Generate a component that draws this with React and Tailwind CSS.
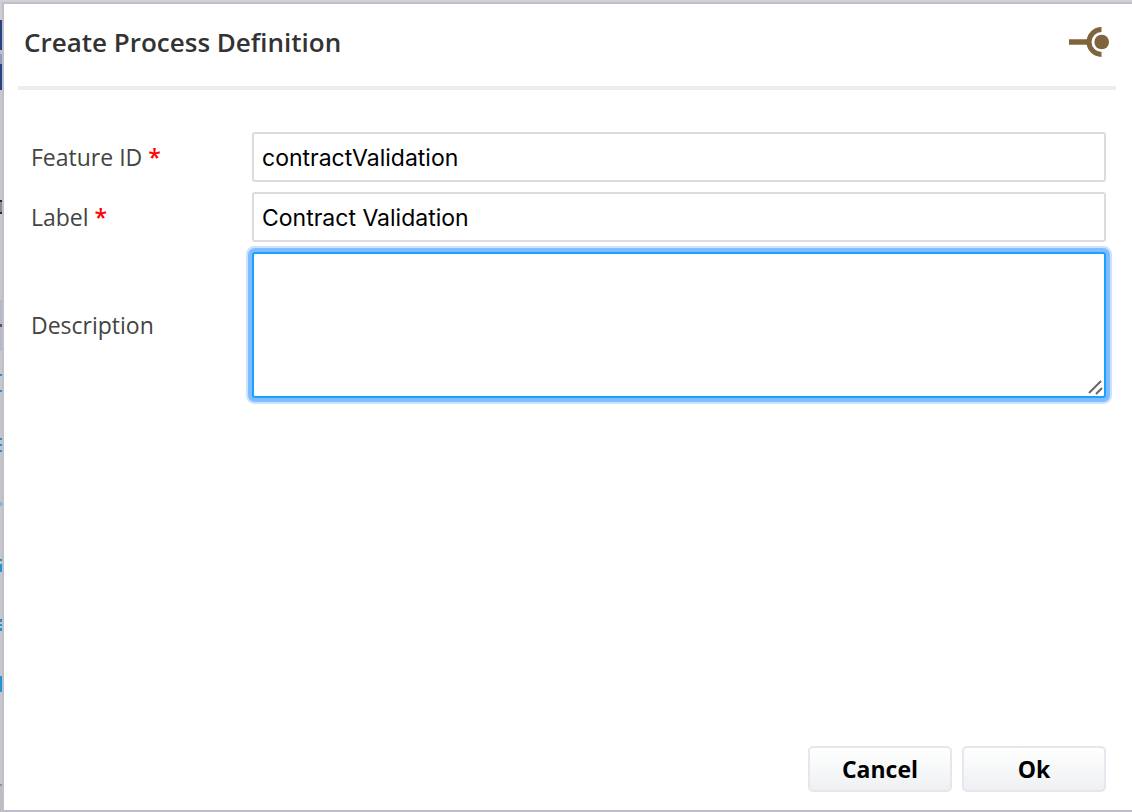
import React from "react";

const strip = [
  ["h-5", "bg-[#cfcfd3]"],
  ["h-[30px]", "bg-[#27427f]"],
  ["h-1", "bg-[#b9c0d0]"],
  ["h-[10px]", "bg-[#8f9cbd]"],
  ["h-[26px]", "bg-[#27427f]"],
  ["h-[110px]", "bg-[#c8c8cb]"],
  ["h-[2px]", "bg-[#2a2a2c]"],
  ["h-[10px]", "bg-[#8a8a8e]"],
  ["h-[2px]", "bg-[#2a2a2c]"],
  ["h-[86px]", "bg-[#c8c8cb]"],
  ["h-[24px]", "bg-[#b6bac8]"],
  ["h-[3px]", "bg-[#55555a]"],
  ["h-[24px]", "bg-[#b6bac8]"],
  ["h-[23px]", "bg-[#c8c8cb]"],
  ["h-[2px]", "bg-[#2394d2]"],
  ["h-[14px]", "bg-[#c8c8cb]"],
  ["h-[2px]", "bg-[#2394d2]"],
  ["h-[46px]", "bg-[#c4c4c7]"],
  ["h-[2px]", "bg-[#2394d2]"],
  ["h-1", "bg-[#c4c4c7]"],
  ["h-[2px]", "bg-[#2394d2]"],
  ["h-1", "bg-[#c4c4c7]"],
  ["h-[2px]", "bg-[#2394d2]"],
  ["h-[50px]", "bg-[#c4c4c7]"],
  ["h-1", "bg-[#7db8dc]"],
  ["h-[53px]", "bg-[#c8c8cb]"],
  ["h-[2px]", "bg-[#2394d2]"],
  ["h-[3px]", "bg-[#c4c4c7]"],
  ["h-2", "bg-[#2394d2]"],
  ["h-[47px]", "bg-[#c8c8cb]"],
  ["h-[3px]", "bg-[#2394d2]"],
  ["h-[2px]", "bg-[#c4c4c7]"],
  ["h-[2px]", "bg-[#2394d2]"],
  ["h-[2px]", "bg-[#c4c4c7]"],
  ["h-[3px]", "bg-[#2394d2]"],
  ["h-[45px]", "bg-[#c8c8cb]"],
  ["h-4", "bg-[#2394d2]"],
  ["h-[92px]", "bg-[#c8c8cb]"],
  ["h-[2px]", "bg-[#8f8f92]"],
  ["flex-1", "bg-[#bdbdc0]"],
];

function ProcessIcon() {
  return (
    <svg className="h-9 w-[42px] shrink-0" viewBox="0 0 42 36" fill="none" aria-hidden="true">
      <path d="M1 18H20" stroke="#7f643d" strokeWidth="5.5" />
      <path d="M33.5 5.500A12.500 12.500 0 0 0 33.500 30.500" stroke="#7f643d" strokeWidth="5" />
      <circle cx="33.700" cy="18" r="7.300" fill="#7f643d" />
    </svg>
  );
}

function Required() {
  return <span className="font-semibold text-[#ff0000]"> *</span>;
}

const field =
  "w-full min-w-0 rounded-[3px] border-2 border-[#dcdcdc] bg-white px-2 pt-[2px] font-[Inter,sans-serif] text-[23px] text-black outline-none";
const button =
  "h-[46px] w-36 rounded-[5px] border-2 border-[#e6e6ee] bg-linear-to-b from-white to-[#eef0f2] text-[23px] font-bold text-black";

export default function App() {
  return (
    <div className="flex min-h-screen bg-[#d2d2d5] font-['Open_Sans',sans-serif]">
      <div className="flex w-[2px] shrink-0 flex-col" aria-hidden="true">
        {strip.map(([height, color], i) => (
          <div key={i} className={`${height} ${color}`} />
        ))}
      </div>
      <form
        className="mt-[2px] flex min-w-0 flex-1 flex-col border-y-2 border-l-2 border-[#bfbfcb] bg-white"
        onSubmit={(e) => e.preventDefault()}
      >
        <header className="ml-[14px] mr-4 flex h-[86px] items-start justify-between border-b-4 border-[#ececec] px-[6px] pt-5">
          <h1 className="text-[26px] leading-9 font-semibold text-[#333333]">Create Process Definition</h1>
          <ProcessIcon />
        </header>
        <div className="grid grid-cols-[221px_minmax(0,1fr)] items-center gap-y-[10px] pt-[42px] pr-[26px] pl-[27px] text-[23px] text-[#444444]">
          <label htmlFor="feature">Feature ID<Required /></label>
          <input id="feature" className={`${field} h-[50px]`} defaultValue="contractValidation" />
          <label htmlFor="label">Label<Required /></label>
          <input id="label" className={`${field} h-[50px]`} defaultValue="Contract Validation" />
          <label htmlFor="description">Description</label>
          <div className="relative h-[146px]">
            <textarea
              id="description"
              className="block h-full w-full resize-none rounded-[3px] border-2 border-[#16a3ff] bg-white px-2 font-[Inter,sans-serif] text-[23px] text-black shadow-[0_0_0_4px_#80bcff,0_0_0_6px_#cce3ff] outline-none"
            />
            <svg className="pointer-events-none absolute right-[3px] bottom-[2px] size-4" viewBox="0 0 16 16" stroke="#666" strokeWidth="2" aria-hidden="true">
              <path d="M2 13L14 1M9 14L15 8" />
            </svg>
          </div>
        </div>
        <footer className="mt-auto flex justify-end gap-[10px] pt-6 pr-[26px] pb-[18px]">
          <button type="button" className={button}>Cancel</button>
          <button type="submit" className={button}>Ok</button>
        </footer>
      </form>
    </div>
  );
}
